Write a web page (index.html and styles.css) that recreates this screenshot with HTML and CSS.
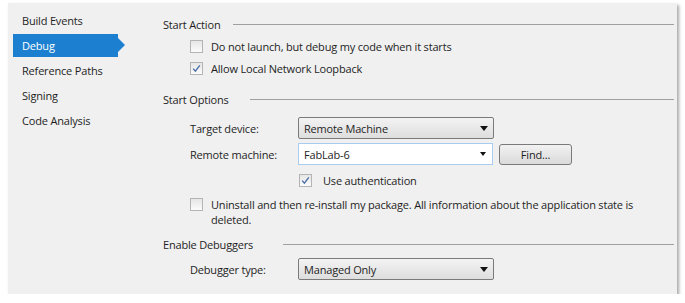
FILE: index.html
```html
<!DOCTYPE html>
<html>
<head>
<meta charset="utf-8">
<link rel="stylesheet" href="styles.css">
</head>
<body>
<div class="panel">
  <nav class="sidebar">
    <div class="nav-item">Build Events</div>
    <div class="nav-item active">Debug</div>
    <div class="nav-item">Reference Paths</div>
    <div class="nav-item">Signing</div>
    <div class="nav-item">Code Analysis</div>
  </nav>
  <main class="content">
    <div class="section-head h1"><span>Start Action</span><i class="rule"></i></div>
    <label class="check-row r1"><span class="cb"></span><span>Do not launch, but debug my code when it starts</span></label>
    <label class="check-row r2"><span class="cb checked"><svg viewBox="0 0 13 13" width="13" height="13"><path d="M3.2 6.6 L5.4 9.2 L9.8 3.4" fill="none" stroke="#4d6fa8" stroke-width="1.4"/></svg></span><span>Allow Local Network Loopback</span></label>

    <div class="section-head h2"><span>Start Options</span><i class="rule"></i></div>
    <div class="field-row f1">
      <span class="field-label">Target device:</span>
      <div class="select"><span>Remote Machine</span><i class="arrow"></i></div>
    </div>
    <div class="field-row f2">
      <span class="field-label">Remote machine:</span>
      <div class="combo"><span>FabLab-6</span><i class="arrow"></i></div>
      <div class="button">Find...</div>
    </div>
    <label class="check-row auth"><span class="cb checked"><svg viewBox="0 0 13 13" width="13" height="13"><path d="M3.2 6.6 L5.4 9.2 L9.8 3.4" fill="none" stroke="#4d6fa8" stroke-width="1.4"/></svg></span><span>Use authentication</span></label>
    <label class="check-row wrap"><span class="cb"></span><span class="wrap-text">Uninstall and then re-install my package. All information about the application state is deleted.</span></label>

    <div class="section-head h3"><span>Enable Debuggers</span><i class="rule"></i></div>
    <div class="field-row f3">
      <span class="field-label">Debugger type:</span>
      <div class="select"><span>Managed Only</span><i class="arrow"></i></div>
    </div>
  </main>
</div>
</body>
</html>
```
FILE: styles.css
```css
* { box-sizing: border-box; }
html, body { margin: 0; padding: 0; background: #ffffff; }
body {
  font-family: "Open Sans", "Noto Sans", sans-serif;
  font-size: 11px;
  letter-spacing: -0.18px;
  color: #1e1e1e;
}
.panel {
  margin: 3px 0 0 8px;
  width: 669px;
  height: 291px;
  background: #f0f0f0;
  box-shadow: 2px 2px 3px rgba(0,0,0,0.35);
  display: flex;
}
.sidebar {
  width: 150px;
  margin-left: 5px;
  padding-top: 5px;
  display: flex;
  flex-direction: column;
}
.nav-item {
  height: 25px;
  line-height: 25px;
  padding-left: 9px;
  width: 105px;
  position: relative;
}
.nav-item.active {
  background: #1c7fd0;
  color: #ffffff;
  height: 23px;
  line-height: 23px;
  margin: 1px 0;
}
.nav-item.active::after {
  content: "";
  position: absolute;
  left: 105px;
  top: 4px;
  border-top: 7.5px solid transparent;
  border-bottom: 7.5px solid transparent;
  border-left: 7px solid #1c7fd0;
}
.content {
  flex: 1;
  padding: 10px 3px 0 0;
  display: flex;
  flex-direction: column;
}
.section-head {
  height: 22px;
  display: flex;
  align-items: center;
}
.section-head .rule {
  flex: 1;
  height: 1px;
  background: #a0a0a0;
  margin-left: 13px;
  margin-top: 1px;
}
.h2 { margin-top: 9px; }
.h2 .rule { margin-left: 21px; }
.h3 { margin-top: 6px; }
.h3 .rule { margin-left: 30px; }
.check-row {
  display: flex;
  align-items: center;
  height: 22px;
  padding-left: 27px;
}
.cb {
  width: 13px;
  height: 13px;
  border: 1px solid #b4b4b4;
  background: linear-gradient(#e6e6e6, #fbfbfb);
  margin-right: 8px;
  flex: none;
  position: relative;
}
.cb svg { position: absolute; left: -1px; top: -1px; }
.auth { padding-left: 136px; margin-top: 4px; }
.auth .cb { margin-right: 11px; }
.wrap {
  align-items: flex-start;
  height: auto;
  margin-top: 6px;
  line-height: 15px;
}
.wrap .cb { margin-top: 1px; }
.wrap-text { width: 455px; }
.field-row {
  display: flex;
  align-items: center;
  height: 22px;
  padding-left: 27px;
}
.f1 { margin-top: 7px; }
.f2 { margin-top: 4px; }
.f3 { margin-top: 3px; }
.field-label { width: 108px; flex: none; }
.select, .combo {
  width: 196px;
  height: 22px;
  display: flex;
  align-items: center;
  padding-left: 5px;
  position: relative;
}
.select {
  border: 1px solid #7a7a7a;
  border-radius: 2px;
  background: linear-gradient(#f3f3f3, #dedede);
}
.combo {
  width: 195px;
  border: 1px solid #a9cdf0;
  background: #ffffff;
}
.select span, .combo span { flex: 1; }
.arrow {
  width: 0;
  height: 0;
  border-left: 4px solid transparent;
  border-right: 4px solid transparent;
  border-top: 5px solid #111;
  margin-right: 5px;
}
.combo .arrow { margin-right: 6px; border-left-width: 3.5px; border-right-width: 3.5px; border-top-width: 4px; }
.button {
  margin-left: 6px;
  width: 73px;
  height: 21px;
  border: 1px solid #7a7a7a;
  border-radius: 3px;
  background: linear-gradient(#f2f2f2, #dadada);
  display: flex;
  align-items: center;
  justify-content: center;
}
```
